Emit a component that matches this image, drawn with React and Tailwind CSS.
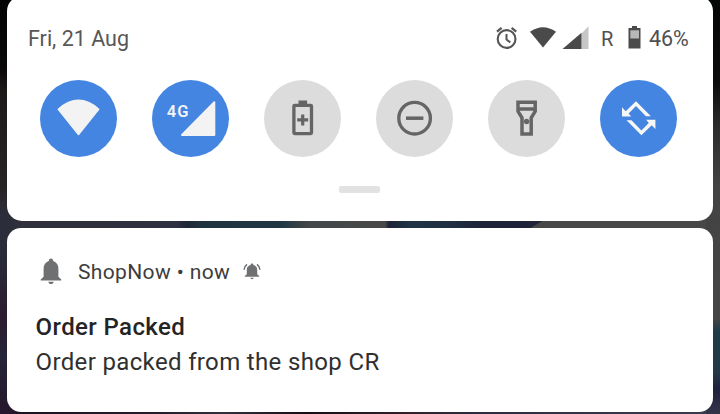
function Wallpaper() {
  return (
    <svg className="absolute inset-0" width="720" height="414" viewBox="0 0 720 414" aria-hidden="true">
      <defs>
        <linearGradient id="left" x1="0" y1="0" x2="0" y2="1">
          <stop offset="0" stopColor="#030303" />
          <stop offset="0.17" stopColor="#0b0909" />
          <stop offset="0.22" stopColor="#1c1919" />
          <stop offset="0.45" stopColor="#272224" />
          <stop offset="0.52" stopColor="#2d2e3b" />
          <stop offset="0.64" stopColor="#292938" />
          <stop offset="0.76" stopColor="#2c1b2f" />
          <stop offset="0.86" stopColor="#252438" />
          <stop offset="1" stopColor="#25162b" />
        </linearGradient>
        <linearGradient id="right" x1="0" y1="0" x2="0" y2="1">
          <stop offset="0" stopColor="#050606" />
          <stop offset="0.2" stopColor="#0c0c0a" />
          <stop offset="0.3" stopColor="#2a2a29" />
          <stop offset="0.45" stopColor="#434343" />
          <stop offset="0.77" stopColor="#454545" />
          <stop offset="0.8" stopColor="#1f3b48" />
          <stop offset="0.9" stopColor="#243846" />
          <stop offset="0.94" stopColor="#20213d" />
          <stop offset="1" stopColor="#34344a" />
        </linearGradient>
        <linearGradient id="middle" gradientUnits="userSpaceOnUse" x1="0" y1="0" x2="720" y2="0">
          <stop offset="0" stopColor="#2f2f3c" />
          <stop offset="0.245" stopColor="#2f3040" />
          <stop offset="0.26" stopColor="#1e2737" />
          <stop offset="0.28" stopColor="#20343f" />
          <stop offset="0.39" stopColor="#203743" />
          <stop offset="0.43" stopColor="#434749" />
          <stop offset="0.535" stopColor="#474747" />
          <stop offset="0.54" stopColor="#1c2438" />
          <stop offset="0.57" stopColor="#1f3545" />
          <stop offset="0.62" stopColor="#1f3041" />
          <stop offset="0.67" stopColor="#1d2238" />
          <stop offset="0.76" stopColor="#20233a" />
        </linearGradient>
        <linearGradient id="bottom" x1="0" y1="0" x2="1" y2="0">
          <stop offset="0" stopColor="#1c1122" />
          <stop offset="0.2" stopColor="#241b2c" />
          <stop offset="0.3" stopColor="#30303f" />
          <stop offset="0.42" stopColor="#180c14" />
          <stop offset="0.57" stopColor="#32202b" />
          <stop offset="0.65" stopColor="#2c2b3c" />
          <stop offset="1" stopColor="#3c3b4b" />
        </linearGradient>
      </defs>
      <rect width="360" height="414" fill="url(#left)" />
      <rect x="360" width="360" height="414" fill="url(#right)" />
      <rect x="14" y="218" width="692" height="14" fill="url(#middle)" />
      <path d="M544 220l-15 9v3h177v-14z" fill="#474747" />
      <rect x="16" y="410" width="690" height="4" fill="url(#bottom)" />
    </svg>
  );
}

function AlarmIcon() {
  return (
    <svg width="22" height="24" viewBox="0 0 22 24" fill="none" stroke="#555555">
      <circle cx="10.6" cy="13" r="8.9" strokeWidth="2.1" />
      <path d="M1 5.7l4.600-3.900M20.200 5.7l-4.600-3.900" strokeWidth="2.2" />
      <path d="M10.500 7.900v5.600l3.800 2.900" strokeWidth="2" />
    </svg>
  );
}

function StatusIcons() {
  return (
    <div className="mr-[3px] flex items-start">
      <AlarmIcon />
      <svg className="ml-[11px]" width="28" height="24" viewBox="0 0 28 24">
        <path d="M1 5.800Q14-3.200 27 5.800L14 21.500z" fill="#4a4a4a" />
      </svg>
      <svg className="ml-[5px]" width="28" height="24" viewBox="0 0 28 24">
        <path d="M19.500 7.400L26.500.2V23h-7z" fill="#c6c6c6" />
        <path d="M.5 23L19.500 6.800V23z" fill="#4a4a4a" />
      </svg>
      <span className="ml-[11px] mt-[3px] w-[16px] text-[20px] leading-[20px] text-[#505050]">R</span>
      <svg className="ml-[10px]" width="16" height="24" viewBox="0 0 16 24">
        <path d="M5 0h5v2h3.500v20.500H1.500V2H5z" fill="#4a4a4a" />
        <path d="M3.300 4.300h8.700v8.200H3.300z" fill="#b8b8b8" />
      </svg>
      <span className="ml-[6px] mt-[1px] w-[40px] whitespace-nowrap text-[21.5px] leading-[24px] tracking-[-0.1px] text-[#505050]">46%</span>
    </div>
  );
}

function Tile({ on, children }) {
  return (
    <button className={on ? "size-[77px] rounded-full bg-[#4485e1]" : "size-[77px] rounded-full bg-[#dcdcdc]"}>
      <svg width="77" height="77" viewBox="0 0 77 77" fill="none">
        {children}
      </svg>
    </button>
  );
}

function RotateArrow() {
  return <path d="M36 21.200L50.900 36.200H45.900L36 26L28.600 33.500L31.200 36.600H22V27.300L25.700 31.200z" fill="#f7f7f7" />;
}

function QuickTiles() {
  return (
    <div className="mt-[29px] flex justify-between pl-[12px] pr-[15px]">
      <Tile on>
        <path d="M18.300 29.200Q38.500 11.500 58.700 29.200L38.500 54.500z" fill="#f3f3f3" stroke="#f3f3f3" strokeWidth="1.500" strokeLinejoin="round" />
      </Tile>
      <Tile on>
        <text x="14.800" y="37.300" fill="#f3f3f3" fontFamily="Roboto" fontSize="16.500" fontWeight="600" letterSpacing="1">4G</text>
        <path d="M30 55L62.300 22.200V55z" fill="#f3f3f3" stroke="#f3f3f3" strokeWidth="2" strokeLinejoin="round" />
      </Tile>
      <Tile>
        <path d="M34.500 20.500h8.600v4h-8.600z" fill="#656565" />
        <rect x="29.900" y="25.400" width="17.600" height="28.200" rx="0.800" stroke="#656565" strokeWidth="3.300" />
        <path d="M38.700 34.400v11M33.200 39.900h11" stroke="#656565" strokeWidth="3.200" />
      </Tile>
      <Tile>
        <circle cx="38.600" cy="38.200" r="15.800" stroke="#656565" strokeWidth="3.300" />
        <path d="M30 38.200h17.400" stroke="#656565" strokeWidth="3.500" />
      </Tile>
      <Tile>
        <path d="M30 22.300h17.200v9l-4 6.500v16.300h-9.200V37.800L30 31.300zM30 29h17.200" stroke="#656565" strokeWidth="3.500" />
        <circle cx="38.600" cy="41.500" r="2.700" fill="#656565" />
      </Tile>
      <Tile on>
        <RotateArrow />
        <g transform="rotate(180 38.7 38.200)">
          <RotateArrow />
        </g>
      </Tile>
    </div>
  );
}

function Bell() {
  return (
    <svg width="22" height="27" viewBox="0 0 22 27" fill="#6e7072">
      <path d="M11 .5c1.400 0 2.200 1 2.200 2.500 3.600 1.200 5.200 4 5.200 7.600v8.200l2.900 2.700v.9H.7v-.9l2.900-2.700v-8.200C3.600 7 5.200 4.200 8.800 3 8.800 1.500 9.600.5 11 .5z" />
      <path d="M8.300 23.800h5.400c-.3 1.500-1.300 2.300-2.700 2.300s-2.400-.8-2.700-2.300z" />
    </svg>
  );
}

function RingingBell() {
  return (
    <svg width="18" height="17" viewBox="0 0 18 17" fill="#6e7072">
      <path d="M9 .6c.9 0 1.400.6 1.400 1.500 2.600.7 3.800 2.300 3.800 4.700v4.400l2 1.900v.7H1.800v-.7l2-1.900V6.800c0-2.400 1.200-4 3.800-4.700C7.600 1.200 8.100.6 9 .6zM7.300 14.800h3.400c-.2.900-.8 1.400-1.700 1.400s-1.500-.5-1.700-1.400z" />
      <path d="M1 6.700c.1-2.300 1.200-4.100 3-5.400M17 6.700c-.1-2.300-1.200-4.100-3-5.400" fill="none" stroke="#6e7072" strokeWidth="1.500" />
    </svg>
  );
}

export default function App() {
  return (
    <div className="relative h-[414px] w-[720px] overflow-hidden font-[Roboto,sans-serif]">
      <Wallpaper />
      <main className="relative flex flex-col gap-[7px] pl-[7px] pr-[7px]">
        <section className="-mt-[4px] h-[225px] rounded-[15px] bg-white pl-[21px] pr-[21px] pt-[30px]">
          <header className="flex h-[25px] items-start justify-between">
            <span className="mt-[1px] whitespace-nowrap text-[21.5px] leading-[24px] text-[#575757]">Fri, 21 Aug</span>
            <StatusIcons />
          </header>
          <QuickTiles />
          <div className="ml-[311px] mt-[29px] h-[7px] w-[41px] rounded-[2px] bg-[#e2e2e2]" />
        </section>
        <section className="h-[184px] rounded-[14px] bg-white pl-[28.6px] pt-[29px]">
          <header className="flex h-[28px] items-center pl-[4.4px]">
            <Bell />
            <span className="ml-[16px] w-[153px] whitespace-nowrap pt-[2px] text-[21px] leading-[28px] tracking-[0.37px] text-[#3d3d3d]">ShopNow • now</span>
            <span className="ml-[12px]"><RingingBell /></span>
          </header>
          <h1 className="mt-[26px] whitespace-nowrap text-[24px] font-medium leading-[32px] tracking-[0.38px] text-[#242424]">Order Packed</h1>
          <p className="mt-[3px] whitespace-nowrap text-[24px] leading-[32px] tracking-[0.35px] text-[#303030]">Order packed from the shop CR</p>
        </section>
      </main>
    </div>
  );
}
